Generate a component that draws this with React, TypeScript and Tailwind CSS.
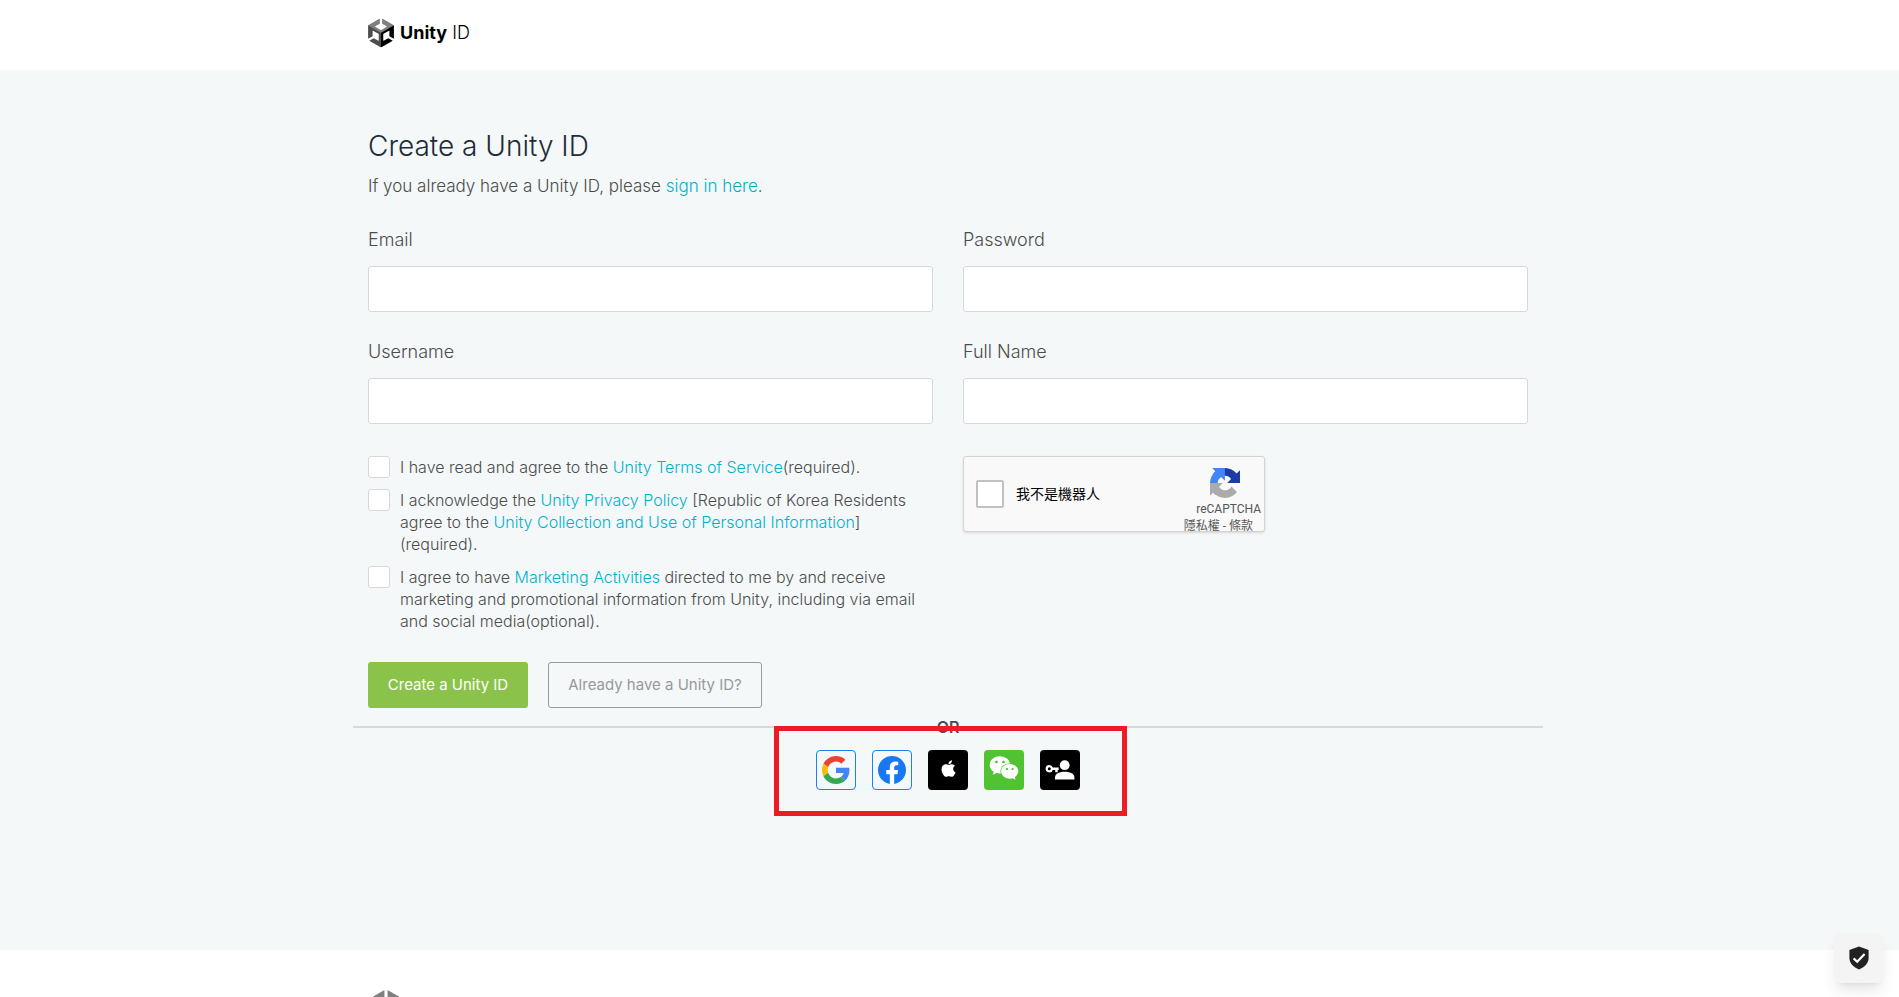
import { useId, type ReactNode } from "react";
import { FaApple, FaWeixin } from "react-icons/fa";

const CUBE =
  "m12.9288 4.2939 3.7997 2.1929c.1366.077.1415.2905 0 .3675l-4.515 2.6076a.4192.4192 0 0 1-.4246 0L7.274 6.8543c-.139-.0745-.1415-.293 0-.3675l3.7972-2.193V0L1.3758 5.5977V16.793l3.7177-2.1456v-4.3858c-.0025-.1565.1813-.2682.318-.1838l4.5148 2.6076a.4252.4252 0 0 1 .2136.3676v5.2127c.0025.1565-.1813.2682-.3179.1838l-3.7996-2.1929-3.7178 2.1457L12 24l9.6954-5.5977-3.7178-2.1457-3.7996 2.1929c-.1341.082-.3229-.0248-.3179-.1838V13.053c0-.1565.087-.2956.2136-.3676l4.5149-2.6076c.134-.082.3228.0224.3179.1838v4.3858l3.7177 2.1456V5.5977L12.9288 0Z";

function UnityCube({ className }: { className?: string }) {
  const id = useId();
  return (
    <svg viewBox="1.3 0 21.4 24" className={className} aria-hidden="true">
      <clipPath id={id}>
        <path d={CUBE} />
      </clipPath>
      <g clipPath={`url(#${id})`}>
        <path d="M12-1 24 5.2 12 12 0 5.2Z" fill="#808080" />
        <path d="M0 4.8 12 11.73V24.5L0 18.5Z" fill="#4d4d4d" />
        <path d="M24 4.8 12 11.73V24.5L24 18.5Z" fill="#000" />
      </g>
    </svg>
  );
}

function GoogleIcon() {
  return (
    <svg viewBox="0 0 48 48" className="size-7" aria-hidden="true">
      <path
        fill="#ea4335"
        d="M24 9.5c3.54 0 6.71 1.22 9.21 3.6l6.85-6.85C35.9 2.38 30.47 0 24 0 14.62 0 6.51 5.38 2.56 13.22l7.98 6.19C12.43 13.72 17.74 9.5 24 9.5z"
      />
      <path
        fill="#4285f4"
        d="M46.98 24.55c0-1.57-.15-3.09-.38-4.55H24v9.02h12.94c-.58 2.96-2.26 5.48-4.78 7.18l7.73 6c4.51-4.18 7.09-10.36 7.09-17.65z"
      />
      <path
        fill="#fbbc05"
        d="M10.53 28.59c-.48-1.45-.76-2.99-.76-4.59s.27-3.14.76-4.59l-7.98-6.19C.92 16.46 0 20.12 0 24c0 3.88.92 7.54 2.56 10.78l7.97-6.19z"
      />
      <path
        fill="#34a853"
        d="M24 48c6.48 0 11.93-2.13 15.89-5.81l-7.73-6c-2.15 1.45-4.92 2.3-8.16 2.3-6.26 0-11.57-4.22-13.47-9.91l-7.98 6.19C6.51 42.62 14.62 48 24 48z"
      />
    </svg>
  );
}

function FacebookIcon() {
  return (
    <svg viewBox="0 0 24 24" className="size-7" aria-hidden="true">
      <path fill="#fff" d="M6 4h12v11l-4 8.8h-4L6 16Z" />
      <path
        fill="#1877f2"
        d="M24 12.073c0-6.627-5.373-12-12-12s-12 5.373-12 12c0 5.99 4.388 10.954 10.125 11.854v-8.385H7.078v-3.47h3.047V9.43c0-3.007 1.792-4.669 4.533-4.669 1.312 0 2.686.235 2.686.235v2.953H15.83c-1.491 0-1.956.925-1.956 1.874v2.25h3.328l-.532 3.47h-2.796v8.385C19.612 23.027 24 18.062 24 12.073z"
      />
    </svg>
  );
}

function RecaptchaLogo() {
  return (
    <svg viewBox="0 0 64 64" className="size-[30px]" aria-hidden="true">
      <path
        fill="#1c3aa9"
        d="M64 31.955l-.033-1.37V4.687l-7.16 7.16C50.948 4.674 42.033.093 32.05.093c-10.4 0-19.622 4.96-25.458 12.64l11.736 11.86a15.55 15.55 0 0 1 4.754-5.334c2.05-1.6 4.952-2.906 8.968-2.906.485 0 .86.057 1.135.163 4.976.393 9.288 3.14 11.828 7.124l-8.307 8.307L64 31.953"
      />
      <path
        fill="#4285f4"
        d="M31.862.094l-1.37.033H4.594l7.16 7.16C4.58 13.147 0 22.06 0 32.046c0 10.4 4.96 19.622 12.64 25.458L24.5 45.768a15.55 15.55 0 0 1-5.334-4.754c-1.6-2.05-2.906-4.952-2.906-8.968 0-.485.057-.86.163-1.135.393-4.976 3.14-9.288 7.124-11.828l8.307 8.307L31.86.095"
      />
      <path
        fill="#ababab"
        d="M.001 32.045l.033 1.37v25.898l7.16-7.16c5.86 7.173 14.774 11.754 24.76 11.754 10.4 0 19.622-4.96 25.458-12.64l-11.736-11.86a15.55 15.55 0 0 1-4.754 5.334c-2.05 1.6-4.952 2.906-8.968 2.906-.485 0-.86-.057-1.135-.163-4.976-.393-9.288-3.14-11.828-7.124l8.307-8.307c-10.522.04-22.4.066-27.295-.005"
      />
    </svg>
  );
}

function PasskeyIcon() {
  return (
    <svg viewBox="0 0 40 40" className="size-10" fill="#fff" aria-hidden="true">
      <circle cx="24.7" cy="15.2" r="4.9" />
      <path d="M15 29.6v-2c0-4.2 5.2-5.8 9.7-5.8s9.7 1.6 9.7 5.8v2Z" />
      <path
        fillRule="evenodd"
        d="M9.3 15a3.7 3.7 0 0 1 3.5 2.5h5.9v2.4h-1v2.3h-2.5v-2.3h-2.4A3.7 3.7 0 1 1 9.3 15Zm0 2.2a1.5 1.5 0 1 0 0 3 1.5 1.5 0 0 0 0-3Z"
      />
    </svg>
  );
}

function ShieldIcon() {
  return (
    <svg viewBox="0 0 20 24" className="h-6 w-5" aria-hidden="true">
      <path fill="#222" d="M10 .6 19.6 4v8c0 5-4.2 9.6-9.6 11.4C4.6 21.6.4 17 .4 12V4Z" />
      <path fill="none" stroke="#fff" strokeWidth="2.2" d="m4.6 12.4 3.6 3.4 7.4-7.8" />
    </svg>
  );
}

function Field({ id, label, type = "text" }: { id: string; label: string; type?: string }) {
  return (
    <div className="flex flex-col gap-3">
      <label htmlFor={id} className="text-lg leading-7 font-light">
        {label}
      </label>
      <input
        id={id}
        type={type}
        className="h-[46px] w-full rounded-[3px] border border-[#d5d9db] bg-white px-3 text-base outline-none"
      />
    </div>
  );
}

function Link({ children }: { children: ReactNode }) {
  return (
    <a href="#" className="text-[#00b2cc]">
      {children}
    </a>
  );
}

function Consent({ id, children }: { id: string; children: ReactNode }) {
  return (
    <div className="flex items-start gap-2.5">
      <input
        id={id}
        type="checkbox"
        className="size-[22px] shrink-0 appearance-none rounded-[3px] border border-[#d5d9db] bg-white"
      />
      <label htmlFor={id} className="text-base leading-[22px] font-light">
        {children}
      </label>
    </div>
  );
}

function Social({ label, className, children }: { label: string; className: string; children: ReactNode }) {
  return (
    <button
      type="button"
      aria-label={label}
      className={`flex size-10 items-center justify-center rounded ${className}`}
    >
      {children}
    </button>
  );
}

export default function App() {
  return (
    <div className="flex h-screen flex-col overflow-hidden bg-white font-[Inter,'Noto_Sans_CJK_TC',sans-serif] text-[#4c4c4c]">
      <header className="shrink-0 pr-[3px]">
        <div className="mx-auto flex h-[70px] max-w-[1190px] px-[15px] pt-[18px]">
          <a href="#" className="flex h-[30px] items-center gap-1.5 text-[18px] leading-7 text-black">
            <UnityCube className="h-[30px] w-[26px]" />
            <span>
              <b className="font-bold">Unity</b> <span className="font-light">ID</span>
            </span>
          </a>
        </div>
      </header>

      <main className="h-[880px] shrink-0 bg-[#f4f8f9] pt-14 pr-[3px]">
        <div className="mx-auto max-w-[1190px]">
          <form className="px-[15px]" onSubmit={(e) => e.preventDefault()}>
            <h1 className="text-[28px] leading-10 font-light text-[#222c37]">Create a Unity ID</h1>
            <p className="mt-2 text-[17px] leading-6 font-light">
              If you already have a Unity ID, please <Link>sign in here</Link>.
            </p>

            <div className="mt-7 grid grid-cols-2 gap-x-[30px] gap-y-[26px]">
              <Field id="email" label="Email" type="email" />
              <Field id="password" label="Password" type="password" />
              <Field id="username" label="Username" />
              <Field id="fullname" label="Full Name" />
            </div>

            <div className="mt-8 grid grid-cols-2 gap-x-[30px]">
              <div className="flex flex-col gap-[11px]">
                <Consent id="terms">
                  I have read and agree to the <Link>Unity Terms of Service</Link>(required).
                </Consent>
                <Consent id="privacy">
                  I acknowledge the <Link>Unity Privacy Policy</Link> [Republic of Korea Residents agree to the{" "}
                  <Link>Unity Collection and Use of Personal Information</Link>] (required).
                </Consent>
                <Consent id="marketing">
                  I agree to have <Link>Marketing Activities</Link> directed to me by and receive marketing and
                  promotional information from Unity, including via email and social media(optional).
                </Consent>
              </div>

              <div className="flex h-[76px] w-[302px] justify-between rounded-[3px] border border-[#d3d3d3] bg-[#f9f9f9] shadow-sm">
                <div className="flex items-center gap-3 pl-3">
                  <input
                    id="robot"
                    type="checkbox"
                    className="size-7 appearance-none rounded-[2px] border-2 border-[#c1c1c1] bg-white"
                  />
                  <label htmlFor="robot" className="text-sm text-black">
                    我不是機器人
                  </label>
                </div>
                <div className="flex flex-col items-end pt-[11px] pr-[3px] font-[Roboto,'Noto_Sans_CJK_TC',sans-serif] text-[#555]">
                  <div className="pr-[21px]">
                    <RecaptchaLogo />
                  </div>
                  <span className="text-xs leading-[22px]">reCAPTCHA</span>
                  <span className="pr-2 text-xs leading-3">
                    <a href="#">隱私權</a> - <a href="#">條款</a>
                  </span>
                </div>
              </div>
            </div>

            <div className="mt-[30px] flex gap-5">
              <button type="submit" className="h-[46px] w-40 rounded-[3px] bg-[#8bc34a] text-[15px] text-white">
                Create a Unity ID
              </button>
              <button
                type="button"
                className="h-[46px] w-[214px] rounded-[3px] border border-[#999] text-[15px] text-[#999]"
              >
                Already have a Unity ID?
              </button>
            </div>
          </form>

          <section className="relative mt-2" aria-label="Other sign in options">
            <div className="flex items-center">
              <span className="h-0.5 flex-1 bg-[#d6dadb]" />
              <span className="text-base leading-[22px] font-semibold">OR</span>
              <span className="h-0.5 flex-1 bg-[#d6dadb]" />
            </div>
            <div className="mt-3 flex justify-center gap-4">
              <Social label="Google" className="border border-[#1a82f0]">
                <GoogleIcon />
              </Social>
              <Social label="Facebook" className="border border-[#1a82f0]">
                <FacebookIcon />
              </Social>
              <Social label="Apple" className="bg-black pb-1">
                <FaApple className="size-[19px] text-white" />
              </Social>
              <Social label="WeChat" className="bg-[#51c332] pb-1">
                <FaWeixin className="size-[30px] text-white" />
              </Social>
              <Social label="Passkey" className="bg-black">
                <PasskeyIcon />
              </Social>
            </div>
            <div className="pointer-events-none absolute top-2.5 left-[421px] h-[90px] w-[353px] border-5 border-[#ed1c24]" />
          </section>
        </div>
      </main>

      <footer className="flex-1 overflow-hidden bg-white pt-10 pr-[3px]">
        <div className="mx-auto max-w-[1190px] px-[15px]">
          <UnityCube className="h-10 w-9" />
        </div>
      </footer>

      <button
        type="button"
        aria-label="Privacy settings"
        className="fixed right-[15px] bottom-3.5 flex size-[50px] items-center justify-center rounded-md bg-[#f4f4f4] shadow-lg"
      >
        <ShieldIcon />
      </button>
    </div>
  );
}
